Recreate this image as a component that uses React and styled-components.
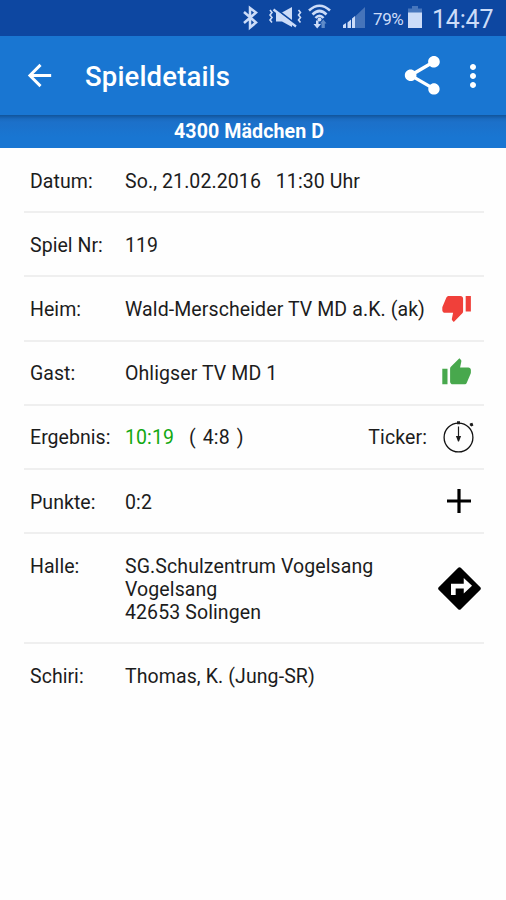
import React from "react";
import styled, { createGlobalStyle } from "styled-components";

const GlobalStyle = createGlobalStyle`
  * { box-sizing: border-box; }
  body { margin: 0; background: #fefefe; font-family: Roboto, sans-serif; }
`;

const Screen = styled.main`
  width: 506px;
  height: 900px;
  overflow: hidden;
  background: #fefefe;
`;

const StatusBar = styled.div`
  height: 36px;
  display: flex;
  align-items: center;
  padding-left: 242px;
  background: #0d47a1;
  color: #ccdcf8;
`;

const StatusIcon = styled.svg`
  display: block;
  flex: none;
  width: ${(p) => p.$w}px;
  height: 36px;
  margin-right: ${(p) => p.$gap}px;
`;

const Percent = styled.span`
  width: 34px;
  padding-top: 2px;
  font-size: 17px;
  letter-spacing: -0.4px;
  white-space: nowrap;
`;

const Clock = styled.span`
  padding-top: 2px;
  font-size: 25px;
  letter-spacing: -0.2px;
  white-space: nowrap;
`;

const AppBar = styled.header`
  height: 79px;
  display: flex;
  align-items: center;
  padding: 0 15px 0 22px;
  background: #1976d2;
  color: #fff;
`;

const Title = styled.h1`
  flex: 1;
  margin: 0;
  padding: 2px 0 0 28px;
  font-size: 27.5px;
  font-weight: 500;
  letter-spacing: 0.15px;
`;

const Glyph = styled.svg`
  display: block;
  flex: none;
  width: ${(p) => p.$size}px;
  height: ${(p) => p.$size}px;
  margin-left: ${(p) => p.$ml || 0}px;
  fill: ${(p) => p.$color || "currentColor"};
`;

const Band = styled.div`
  height: 33px;
  line-height: 34px;
  text-align: center;
  padding-right: 8px;
  background: linear-gradient(#11549a 0, #155fae 2px, #1a6bc0 4px, #1c70c9 7px, #1976d2 22px);
  color: #fff;
  font-size: 19.6px;
  font-weight: 700;
  letter-spacing: 0.08px;
`;

const List = styled.dl`
  margin: 1px 22px 0 24px;
`;

const Row = styled.div`
  display: flex;
  align-items: ${(p) => (p.$tall ? "flex-start" : "center")};
  height: ${(p) => (p.$tall ? 110 : 64.2)}px;
  padding: ${(p) => (p.$tall ? "21px" : p.$last ? "0" : "2px")} 0 0 6px;
  border-bottom: ${(p) => (p.$last ? "0" : "2px solid #efefef")};
  color: #1c1c1c;
  font-size: 19.5px;
  line-height: 23px;
  letter-spacing: 0.1px;
`;

const Label = styled.dt`
  width: 95px;
  flex: none;
  white-space: nowrap;
  letter-spacing: 0.05px;
`;

const Value = styled.dd`
  flex: 1;
  margin: 0;
  white-space: pre;
`;

const Score = styled.span`
  color: #12a812;
`;

const HalfTime = styled.span`
  margin-left: 15px;
  word-spacing: 2px;
`;

const TickerLabel = styled.span`
  margin-right: 7px;
`;

const Action = styled.span`
  width: 50px;
  flex: none;
  display: flex;
  justify-content: center;
  align-self: center;
  margin-top: ${(p) => p.$shift || 0}px;
`;

const paths = {
  back: "M20 11H7.83l5.59-5.59L12 4l-8 8 8 8 1.41-1.41L7.83 13H20v-2z",
  share:
    "M18 16.08c-.76 0-1.44.3-1.96.77L8.91 12.7c.05-.23.09-.46.09-.7s-.04-.47-.09-.7l7.05-4.11c.54.5 1.25.81 2.04.81 1.66 0 3-1.34 3-3s-1.34-3-3-3-3 1.34-3 3c0 .24.04.47.09.7L8.04 9.81C7.5 9.31 6.79 9 6 9c-1.66 0-3 1.34-3 3s1.34 3 3 3c.79 0 1.5-.31 2.04-.81l7.12 4.16c-.05.21-.08.43-.08.65 0 1.61 1.31 2.92 2.92 2.92s2.92-1.31 2.92-2.92-1.31-2.92-2.92-2.92z",
  more: "M12 8c1.1 0 2-.9 2-2s-.9-2-2-2-2 .9-2 2 .9 2 2 2zm0 2c-1.1 0-2 .9-2 2s.9 2 2 2 2-.9 2-2-.9-2-2-2zm0 6c-1.1 0-2 .9-2 2s.9 2 2 2 2-.9 2-2-.9-2-2-2z",
  down: "M15 3H6c-.83 0-1.54.5-1.84 1.22l-3.02 7.05c-.09.23-.14.47-.14.73v2c0 1.1.9 2 2 2h6.31l-.95 4.57-.03.32c0 .41.17.79.44 1.06L9.83 23l6.59-6.59c.36-.36.58-.86.58-1.41V5c0-1.1-.9-2-2-2zm4 0v12h4V3h-4z",
  up: "M1 21h4V9H1v12zm22-11c0-1.1-.9-2-2-2h-6.31l.95-4.57.03-.32c0-.41-.17-.79-.44-1.06L14.17 1 7.59 7.59C7.22 7.95 7 8.45 7 9v10c0 1.1.9 2 2 2h9c.83 0 1.54-.5 1.84-1.22l3.02-7.05c.09-.23.14-.47.14-.73v-2z",
  directions:
    "M21.8 11.4l-9.2-9.2c-.33-.33-.87-.33-1.2 0l-9.2 9.2c-.33.33-.33.87 0 1.2l9.2 9.2c.33.33.87.33 1.2 0l9.2-9.2c.33-.33.33-.87 0-1.2zM14 14.3V12h-3.800v3H8v-5.200h6V7l3.900 3.700z",
};

const Icon = ({ name, ...rest }) => (
  <Glyph viewBox="0 0 24 24" {...rest}>
    <path d={paths[name]} />
  </Glyph>
);

const Stopwatch = () => (
  <Glyph viewBox="0 0 36 36" $size={36}>
    <circle cx="17.5" cy="18.5" r="14.4" fill="none" stroke="#111" strokeWidth="1.3" />
    <path d="M16 2.3h3v3h-3zM28.8 4.4l2.600-.6 1 2.600-2 1-1.600-1.200zM16.900 7.500h1.200v9.500h2l-2.100 5.500h-1l-2.100-5.500h2z" />
  </Glyph>
);

const Plus = () => (
  <Glyph viewBox="0 0 24 24" $size={24} $color="#000">
    <path d="M10.4 0h3.2v10.4H24v3.2H13.6V24h-3.2V13.6H0v-3.2h10.4z" />
  </Glyph>
);

const StatusIcons = () => (
  <>
    <StatusIcon $w={16} $gap={10} viewBox="0 0 16 36">
      <path d="M2 12l12 10.5-6 5V8l6 4.5L2 23" fill="none" stroke="currentColor" strokeWidth="2.5" />
    </StatusIcon>
    <StatusIcon $w={34} $gap={6} viewBox="0 0 34 36">
      <path d="M8 12.5h6L24 7v20l-10-5.5H8z" fill="currentColor" />
      <path d="M6 7.5L29 25" stroke="#0d47a1" strokeWidth="2" />
      <path d="M5.5 9.500L28 26.500" stroke="currentColor" strokeWidth="2.200" />
      <path
        d="M2 10l2 2.5-2 2.5 2 2.5-2 2.5 2 2.5M30.500 10l2 2.500-2 2.500 2 2.500-2 2.500 2 2.500"
        fill="none"
        stroke="currentColor"
        strokeWidth="1.6"
      />
    </StatusIcon>
    <StatusIcon $w={24} $gap={10} viewBox="0 0 24 36">
      <path
        d="M1 10.5Q11.5 1 22 10.5M4.5 14.5Q11.5 7.5 18.5 14.5M7.5 18Q11.5 13.5 15.5 18"
        fill="none"
        stroke="currentColor"
        strokeWidth="2.6"
      />
      <circle cx="11.5" cy="19.5" r="2" fill="currentColor" />
      <path d="M8 20.5h2.5V24H13l-3.800 4.500L5.500 24H8z" fill="currentColor" />
      <path d="M13.5 28v-4.500H12l3.300-4 3.200 4h-1.700V28z" fill="#5f8bc9" />
    </StatusIcon>
    <StatusIcon $w={24} $gap={7} viewBox="0 0 24 36">
      <path d="M23 7v21H13V16.5z" fill="#4674ba" />
      <path d="M1 28v-3l3-2v5zM5.500 28v-5.500l3.500-3V28zM10 28v-9.500l3-2.500v12z" fill="currentColor" />
    </StatusIcon>
  </>
);

const Battery = () => (
  <StatusIcon $w={16} $gap={9} viewBox="0 0 16 36">
    <path d="M5 6h6v2.5h4V13H1V8.5h4z" fill="#4776bd" />
    <path d="M1 12.5h14V28H1z" fill="currentColor" />
  </StatusIcon>
);

export default function App() {
  return (
    <Screen>
      <GlobalStyle />
      <StatusBar>
        <StatusIcons />
        <Percent>79%</Percent>
        <Battery />
        <Clock>14:47</Clock>
      </StatusBar>
      <AppBar>
        <Icon name="back" $size={35} />
        <Title>Spieldetails</Title>
        <Icon name="share" $size={46.6} />
        <Icon name="more" $size={36} $ml={9} />
      </AppBar>
      <Band>4300 Mädchen D</Band>
      <List>
        <Row>
          <Label>Datum:</Label>
          <Value>{"So., 21.02.2016   11:30 Uhr"}</Value>
        </Row>
        <Row>
          <Label>Spiel Nr:</Label>
          <Value>119</Value>
        </Row>
        <Row>
          <Label>Heim:</Label>
          <Value>Wald-Merscheider TV MD a.K. (ak)</Value>
          <Action $shift={-4}><Icon name="down" $size={31.2} $color="#f0403a" $ml={-5} /></Action>
        </Row>
        <Row>
          <Label>Gast:</Label>
          <Value>Ohligser TV MD 1</Value>
          <Action $shift={-2}><Icon name="up" $size={31.2} $color="#48a84d" $ml={-5} /></Action>
        </Row>
        <Row>
          <Label>Ergebnis:</Label>
          <Value><Score>10:19</Score><HalfTime>( 4:8 )</HalfTime></Value>
          <TickerLabel>Ticker:</TickerLabel>
          <Action $shift={-2}><Stopwatch /></Action>
        </Row>
        <Row>
          <Label>Punkte:</Label>
          <Value>0:2</Value>
          <Action $shift={-2}><Plus /></Action>
        </Row>
        <Row $tall>
          <Label>Halle:</Label>
          <Value>{"SG.Schulzentrum Vogelsang\nVogelsang\n42653 Solingen"}</Value>
          <Action $shift={-20}><Icon name="directions" $size={51} $color="#000" /></Action>
        </Row>
        <Row $last>
          <Label>Schiri:</Label>
          <Value>Thomas, K. (Jung-SR)</Value>
        </Row>
      </List>
    </Screen>
  );
}
